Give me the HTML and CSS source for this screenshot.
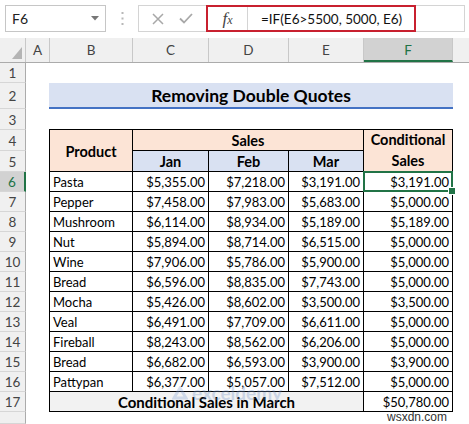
FILE: index.html
```html
<!DOCTYPE html>
<html>
<head>
<meta charset="utf-8">
<link rel="stylesheet" href="styles.css">
</head>
<body>
<div class="formula-bar">
  <div class="name-box">
    <span>F6</span>
    <svg class="caret" width="8" height="5" viewBox="0 0 8 5"><path d="M0 0H8L4 4.5Z" fill="#777"/></svg>
  </div>
  <div class="dots">
    <svg width="3" height="14" viewBox="0 0 3 14"><rect x="0.5" y="0" width="2" height="2" fill="#b8b8b8"/><rect x="0.5" y="5.5" width="2" height="2" fill="#b8b8b8"/><rect x="0.5" y="11" width="2" height="2" fill="#b8b8b8"/></svg>
  </div>
  <div class="fx-group">
    <div class="btns">
      <svg width="12" height="12" viewBox="0 0 12 12"><path d="M1 1L11 11M11 1L1 11" stroke="#a8a8a8" stroke-width="1.5" fill="none"/></svg>
      <svg width="14" height="11" viewBox="0 0 14 11"><path d="M1 5.5L5 9.5L13 1" stroke="#a8a8a8" stroke-width="1.8" fill="none"/></svg>
    </div>
    <div class="formula-red">
      <span class="fx">f<span class="fx-x">x</span></span>
      <span class="fx-sep"></span>
      <span class="formula">=IF(E6&gt;5500, 5000, E6)</span>
    </div>
    <div class="formula-rest"></div>
  </div>
</div>

<div class="col-headers">
  <div class="ch corner">
    <svg width="10" height="12" viewBox="0 0 10 12"><path d="M10 0V12H0Z" fill="#b4b4b4"/></svg>
  </div>
  <div class="ch w-a">A</div>
  <div class="ch w-b">B</div>
  <div class="ch w-c">C</div>
  <div class="ch w-d">D</div>
  <div class="ch w-e">E</div>
  <div class="ch w-f active">F</div>
  <div class="ch w-g"></div>
</div>

<div class="sheet">
  <div class="row-headers">
    <div class="rh h20">1</div>
    <div class="rh h26">2</div>
    <div class="rh h21">3</div>
    <div class="rh h21">4</div>
    <div class="rh h21">5</div>
    <div class="rh h20 active">6</div>
    <div class="rh h20">7</div>
    <div class="rh h20">8</div>
    <div class="rh h20">9</div>
    <div class="rh h20">10</div>
    <div class="rh h20">11</div>
    <div class="rh h20">12</div>
    <div class="rh h20">13</div>
    <div class="rh h20">14</div>
    <div class="rh h20">15</div>
    <div class="rh h20">16</div>
    <div class="rh h20">17</div>
    <div class="rh rest"></div>
  </div>
  <div class="cells">
    <div class="spacer-1"></div>
    <div class="title">Removing Double Quotes</div>
    <div class="spacer-3"></div>
    <div class="tbl">
      <div class="c hd product">Product</div>
      <div class="c hd sales">Sales</div>
      <div class="c hd cond"><span>Conditional</span><span>Sales</span></div>
      <div class="c hd mon">Jan</div>
      <div class="c hd mon">Feb</div>
      <div class="c hd mon">Mar</div>

      <div class="c">Pasta</div><div class="c num">$5,355.00</div><div class="c num">$7,218.00</div><div class="c num">$3,191.00</div><div class="c num sel">$3,191.00</div>
      <div class="c">Pepper</div><div class="c num">$7,458.00</div><div class="c num">$7,983.00</div><div class="c num">$5,683.00</div><div class="c num">$5,000.00</div>
      <div class="c">Mushroom</div><div class="c num">$6,114.00</div><div class="c num">$8,934.00</div><div class="c num">$5,189.00</div><div class="c num">$5,189.00</div>
      <div class="c">Nut</div><div class="c num">$5,894.00</div><div class="c num">$8,714.00</div><div class="c num">$6,515.00</div><div class="c num">$5,000.00</div>
      <div class="c">Wine</div><div class="c num">$7,906.00</div><div class="c num">$5,786.00</div><div class="c num">$5,900.00</div><div class="c num">$5,000.00</div>
      <div class="c">Bread</div><div class="c num">$6,596.00</div><div class="c num">$8,835.00</div><div class="c num">$7,743.00</div><div class="c num">$5,000.00</div>
      <div class="c">Mocha</div><div class="c num">$5,426.00</div><div class="c num">$8,602.00</div><div class="c num">$3,500.00</div><div class="c num">$3,500.00</div>
      <div class="c">Veal</div><div class="c num">$6,491.00</div><div class="c num">$7,709.00</div><div class="c num">$6,611.00</div><div class="c num">$5,000.00</div>
      <div class="c">Fireball</div><div class="c num">$8,243.00</div><div class="c num">$8,562.00</div><div class="c num">$6,206.00</div><div class="c num">$5,000.00</div>
      <div class="c">Bread</div><div class="c num">$6,682.00</div><div class="c num">$6,593.00</div><div class="c num">$3,900.00</div><div class="c num">$3,900.00</div>
      <div class="c">Pattypan</div><div class="c num">$6,377.00</div><div class="c num">$5,057.00</div><div class="c num">$7,512.00</div><div class="c num">$5,000.00</div>

      <div class="c total-label">Conditional Sales in March</div>
      <div class="c num">$50,780.00</div>
    </div>
  </div>
</div>

<div class="watermark">
  <svg width="16" height="14" viewBox="0 0 16 14"><path d="M2 12L8 2L14 12Z" fill="none" stroke="#7f9fd4" stroke-width="3"/></svg>
  <span>exceldemy</span>
</div>
<div class="site">wsxdn.com</div>
</body>
</html>
```

FILE: styles.css
```css
* { box-sizing: border-box; }

html, body {
  margin: 0;
  padding: 0;
  background: #ffffff;
}

body {
  width: 469px;
  height: 424px;
  overflow: hidden;
  position: relative;
  font-family: Lato, "Liberation Sans", sans-serif;
  color: #000;
}

/* ---------- formula bar ---------- */
.formula-bar {
  height: 38px;
  display: flex;
  align-items: flex-start;
  padding: 5px 4px 0 5px;
}

.name-box {
  width: 101px;
  height: 27px;
  border: 1px solid #c6c6c6;
  display: flex;
  align-items: center;
  justify-content: space-between;
  padding: 0 6px 0 6px;
  font-size: 14px;
  color: #222;
}

.dots {
  width: 32px;
  height: 27px;
  display: flex;
  align-items: center;
  justify-content: center;
}

.fx-group {
  flex: 1;
  height: 27px;
  display: flex;
}

.btns {
  width: 68px;
  height: 27px;
  border: 1px solid #d4d4d4;
  border-right: none;
  display: flex;
  align-items: center;
  justify-content: space-around;
  padding: 0 6px 0 6px;
}

.formula-red {
  width: 210px;
  height: 27px;
  border: 2px solid #c8202f;
  display: flex;
  align-items: center;
}

.fx {
  width: 39px;
  text-align: center;
  font-family: "Liberation Serif", serif;
  font-style: italic;
  font-size: 17px;
  color: #444;
}

.fx-x {
  font-size: 12px;
}

.fx-sep {
  width: 1px;
  align-self: stretch;
  background: #d4d4d4;
}

.formula {
  padding-left: 13px;
  font-size: 13.5px;
  color: #111;
  white-space: nowrap;
}

.formula-rest {
  flex: 1;
  border: 1px solid #d4d4d4;
  border-left: none;
}

/* ---------- column headers ---------- */
.col-headers {
  height: 25px;
  display: flex;
  background: #f0f0f0;
  border-bottom: 1px solid #ababab;
}

.ch {
  border-right: 1px solid #c8c8c8;
  display: flex;
  align-items: center;
  justify-content: center;
  font-size: 13.5px;
  color: #444;
}

.corner {
  width: 26px;
  align-items: flex-end;
  justify-content: flex-end;
  padding: 0 3px 3px 0;
}

.w-a { width: 24px; }
.w-b { width: 83px; }
.w-c { width: 76px; }
.w-d { width: 80px; }
.w-e { width: 75px; }
.w-f { width: 89px; }
.w-g { flex: 1; border-right: none; }

.ch.active {
  background: #d2d2d2;
  color: #217346;
  border-bottom: 2px solid #217346;
  padding-top: 2px;
}

/* ---------- sheet ---------- */
.sheet {
  display: flex;
  height: 361px;
}

.row-headers {
  width: 26px;
  flex: none;
  display: flex;
  flex-direction: column;
  background: #f0f0f0;
}

.rh {
  border-bottom: 1px solid #d6d6d6;
  border-right: 1px solid #ababab;
  display: flex;
  align-items: center;
  justify-content: center;
  font-size: 13.5px;
  color: #444;
  padding-top: 1px;
}

.h20 { height: 20px; }
.h21 { height: 21px; }
.h26 { height: 26px; }
.rest { flex: 1; }

.rh.active {
  background: #d2d2d2;
  color: #217346;
  border-right: 2px solid #217346;
}

.cells {
  flex: 1;
  display: flex;
  flex-direction: column;
  padding-left: 23px;
}

.spacer-1 { height: 20px; }
.spacer-3 { height: 20px; }

.title {
  width: 404px;
  height: 26px;
  background: #d9e1f2;
  border-bottom: 2px solid #4472c4;
  display: flex;
  align-items: center;
  justify-content: center;
  font-weight: 700;
  font-size: 17.5px;
  padding-top: 1px;
}

.tbl {
  width: 404px;
  display: grid;
  grid-template-columns: 82px 75px 79px 74px 88px;
  grid-template-rows: 20px 20px;
  grid-auto-rows: 19px;
  gap: 1px;
  padding: 1px;
  background: #000;
}

.c {
  background: #fff;
  display: flex;
  align-items: center;
  padding: 1px 3px 0 3px;
  font-size: 13px;
  white-space: nowrap;
}

.num { justify-content: flex-end; }

.hd {
  background: #fce4d6;
  font-weight: 700;
  font-size: 14.5px;
  justify-content: center;
}

.product { grid-row: span 2; }
.sales { grid-column: span 3; }

.cond {
  grid-row: span 2;
  flex-direction: column;
  line-height: 20.5px;
  padding-top: 0;
}

.mon { background: #d9e1f2; }

.total-label {
  grid-column: span 4;
  background: #f2f2f2;
  font-weight: 700;
  font-size: 15px;
  justify-content: center;
}

.sel {
  position: relative;
  outline: 2px solid #217346;
  outline-offset: -1px;
}

.sel::after {
  content: "";
  position: absolute;
  right: -4px;
  bottom: -4px;
  width: 6px;
  height: 6px;
  background: #217346;
  border: 1px solid #fff;
}

/* ---------- overlays ---------- */
.watermark {
  position: absolute;
  left: 172px;
  top: 384px;
  display: flex;
  align-items: center;
  gap: 4px;
  opacity: 0.3;
  color: #6f90c8;
  font-weight: 700;
  font-size: 19px;
  line-height: 18px;
  pointer-events: none;
}

.site {
  position: absolute;
  left: 387px;
  top: 411px;
  font-family: "Liberation Sans", sans-serif;
  font-size: 12px;
  line-height: 13px;
  color: #333;
}
```
